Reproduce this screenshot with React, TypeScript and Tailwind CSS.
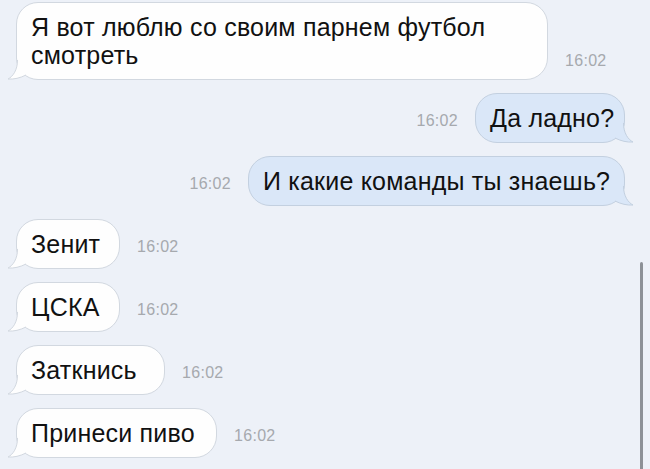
const messages = [
  { out: false, text: 'Я вот люблю со своим парнем футбол смотреть', w: 'w-[532px]', tall: true },
  { out: true, text: 'Да ладно?', w: 'w-[150px]' },
  { out: true, text: 'И какие команды ты знаешь?', w: 'w-[377px]' },
  { out: false, text: 'Зенит', w: 'w-[104px]' },
  { out: false, text: 'ЦСКА', w: 'w-[104px]' },
  { out: false, text: 'Заткнись', w: 'w-[149px]' },
  { out: false, text: 'Принеси пиво', w: 'w-[201px]' },
]

const Tail = ({ out }: { out: boolean }) => {
  const fill = out ? '#dae7f8' : '#fefefe'
  const stroke = out ? '#c3d0e0' : '#d2d8e0'
  return (
    <svg
      width="22"
      height="22"
      viewBox="0 0 22 22"
      className={out ? 'absolute -right-[10px] -bottom-[2px] -scale-x-100' : 'absolute -left-[10px] -bottom-[2px]'}
    >
      <path d="M10.5 1 C10.5 11 6 17.5 1 20 C7 20.5 13 19 19 16 L22 1 Z" fill={fill} />
      <path d="M10.5 1 C10.5 11 6 17.5 1 20 C7 20.5 13 19 19 16" fill="none" stroke={stroke} strokeWidth="1" />
    </svg>
  )
}

const Time = ({ className = '' }: { className?: string }) => (
  <span className={'text-[16px] leading-[18px] text-[#a6a9ae] tracking-[0.3px] ' + className}>16:02</span>
)

export default function App() {
  return (
    <div
      className="relative w-[650px] h-[469px] overflow-hidden bg-[#edf1f8]"
      style={{ fontFamily: '"Liberation Sans", Arial, sans-serif' }}
    >
      <div className="flex flex-col gap-[13px] pt-[2px] pl-[16px] pr-[25px]">
        {messages.map((m, i) => (
          <div key={i} className={m.out ? 'flex items-end justify-end' : 'flex items-end'}>
            {m.out && <Time className="mr-[17px] mb-[13px]" />}
            <div
              className={
                'relative shrink-0 rounded-[22px] border pl-[14px] pr-[10px] py-[10px] text-[25px] leading-[28px] tracking-[0.2px] text-[#111] ' +
                (m.out ? 'bg-[#dae7f8] border-[#c3d0e0] ' : 'bg-[#fefefe] border-[#d2d8e0] ') +
                (m.tall ? '' : 'whitespace-nowrap ') +
                m.w
              }
            >
              <Tail out={m.out} />
              <span className="relative">{m.text}</span>
            </div>
            {!m.out && <Time className={m.tall ? 'ml-[17px] mb-[10px]' : 'ml-[17px] mb-[13px]'} />}
          </div>
        ))}
      </div>
      <div className="absolute left-[640px] top-[262px] bottom-0 w-[3px] rounded-t-full bg-[#8d9197]" />
    </div>
  )
}
